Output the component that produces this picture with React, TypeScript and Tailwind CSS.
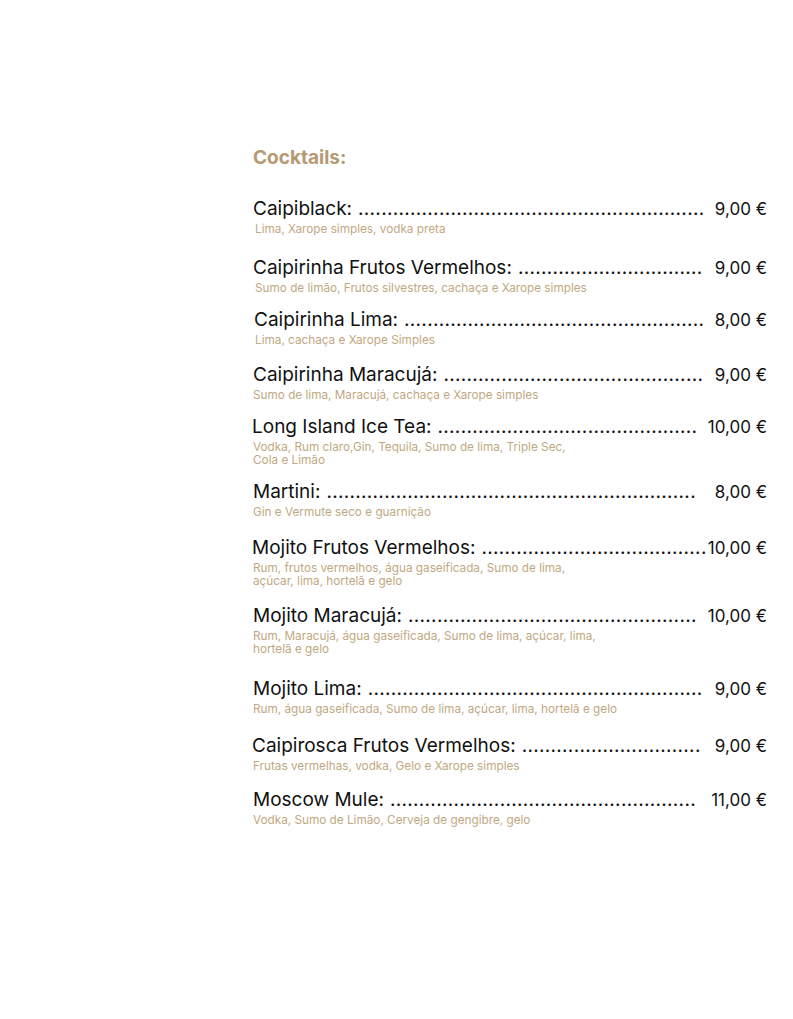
import { useLayoutEffect, useRef, useState } from "react";

type Item = {
  name: string;
  price: string;
  desc: string[];
  mt: string;
  gap: string;
  dx?: string;
  ddx?: string;
};

const items: Item[] = [
  { name: "Caipiblack:", price: "9,00 €", desc: ["Lima, Xarope simples, vodka preta"], mt: "mt-0", gap: "ml-[10px]", ddx: "pl-[2px]" },
  { name: "Caipirinha Frutos Vermelhos:", price: "9,00 €", desc: ["Sumo de limão, Frutos silvestres, cachaça e Xarope simples"], mt: "mt-[21px]", gap: "ml-[10px]", ddx: "pl-[2px]" },
  { name: "Caipirinha Lima:", price: "8,00 €", desc: ["Lima, cachaça e Xarope Simples"], mt: "mt-[14px]", gap: "ml-[8px]", dx: "pl-[1px]", ddx: "pl-[2px]" },
  { name: "Caipirinha Maracujá:", price: "9,00 €", desc: ["Sumo de lima, Maracujá, cachaça e Xarope simples"], mt: "mt-[17px]", gap: "ml-[10px]" },
  { name: "Long Island Ice Tea:", price: "10,00 €", desc: ["Vodka, Rum claro,Gin, Tequila, Sumo de lima, Triple Sec,", "Cola e Limão"], mt: "mt-[14px]", gap: "ml-[9px]", dx: "-ml-[1px]" },
  { name: "Martini:", price: "8,00 €", desc: ["Gin e Vermute seco e guarnição"], mt: "mt-[14px]", gap: "ml-[18px]" },
  { name: "Mojito Frutos Vermelhos:", price: "10,00 €", desc: ["Rum, frutos vermelhos, água gaseificada, Sumo de lima,", "açúcar, lima, hortelã e gelo"], mt: "mt-[18px]", gap: "ml-0", dx: "-ml-[1px]" },
  { name: "Mojito Maracujá:", price: "10,00 €", desc: ["Rum, Maracujá, água gaseificada, Sumo de lima, açúcar, lima,", "hortelã e gelo"], mt: "mt-[17px]", gap: "ml-[10px]" },
  { name: "Mojito Lima:", price: "9,00 €", desc: ["Rum, água gaseificada, Sumo de lima, açúcar, lima, hortelã e gelo"], mt: "mt-[22px]", gap: "ml-[8px]" },
  { name: "Caipirosca Frutos Vermelhos:", price: "9,00 €", desc: ["Frutas vermelhas, vodka, Gelo e Xarope simples"], mt: "mt-[19px]", gap: "ml-[10px]", dx: "-ml-[1px]" },
  { name: "Moscow Mule:", price: "11,00 €", desc: ["Vodka, Sumo de Limão, Cerveja de gengibre, gelo"], mt: "mt-[16px]", gap: "ml-[11px]" },
];

function Leader() {
  const boxRef = useRef<HTMLSpanElement>(null);
  const probeRef = useRef<HTMLSpanElement>(null);
  const [count, setCount] = useState(0);

  useLayoutEffect(() => {
    const box = boxRef.current;
    const probe = probeRef.current;
    if (!box || !probe) return;
    const dot = probe.getBoundingClientRect().width / 20;
    const w = box.getBoundingClientRect().width;
    if (dot > 0) setCount(Math.max(0, Math.floor(w / dot)));
  }, []);

  return (
    <span ref={boxRef} className="relative ml-[6px] min-w-0 flex-1 whitespace-nowrap text-[19px] tracking-[0.3px]">
      <span ref={probeRef} aria-hidden className="invisible absolute left-0 top-0">
        {"...................."}
      </span>
      {".".repeat(count)}
    </span>
  );
}

export default function App() {
  return (
    <div className="min-h-[1019px] w-full bg-white font-['Inter',sans-serif]">
      <div className="ml-[253px] w-[514px] pt-[146px]">
        <h2 className="text-[19px] leading-[24px] font-bold text-[#b59a74]">Cocktails:</h2>

        <div className="mt-[28px] flex flex-col">
          {items.map((item) => (
            <div key={item.name} className={item.mt}>
              <div className={`flex items-baseline leading-[22px] text-[#111111] ${item.dx ?? ""}`}>
                <span className="whitespace-nowrap text-[19px]">{item.name}</span>
                <Leader />
                <span className={`whitespace-nowrap text-[17px] ${item.gap}`}>{item.price}</span>
              </div>
              <div className={`mt-[3px] text-[11.75px] leading-[13px] text-[#bfa882] ${item.ddx ?? ""}`}>
                {item.desc.map((line) => (
                  <p key={line}>{line}</p>
                ))}
              </div>
            </div>
          ))}
        </div>
      </div>
    </div>
  );
}
